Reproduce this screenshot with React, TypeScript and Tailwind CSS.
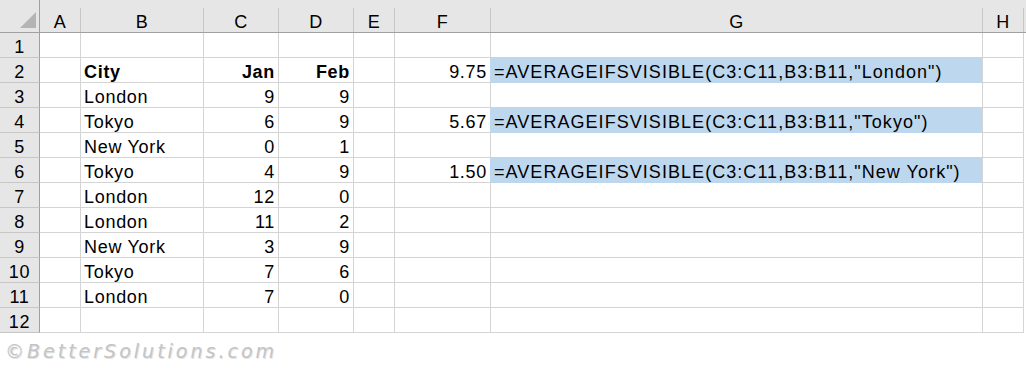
import React from "react";

const COLS = ["A", "B", "C", "D", "E", "F", "G", "H"];
const WIDTHS = ["w-[41px]", "w-[123px]", "w-[75px]", "w-[75px]", "w-[41px]", "w-[96px]", "w-[492px]", "w-[41px]"];

type Cell = { t: string; right?: boolean; bold?: boolean; hl?: boolean };

const data: Record<number, Record<string, Cell>> = {
  2: {
    B: { t: "City", bold: true },
    C: { t: "Jan", bold: true, right: true },
    D: { t: "Feb", bold: true, right: true },
    F: { t: "9.75", right: true },
    G: { t: '=AVERAGEIFSVISIBLE(C3:C11,B3:B11,"London")', hl: true },
  },
  3: { B: { t: "London" }, C: { t: "9", right: true }, D: { t: "9", right: true } },
  4: {
    B: { t: "Tokyo" },
    C: { t: "6", right: true },
    D: { t: "9", right: true },
    F: { t: "5.67", right: true },
    G: { t: '=AVERAGEIFSVISIBLE(C3:C11,B3:B11,"Tokyo")', hl: true },
  },
  5: { B: { t: "New York" }, C: { t: "0", right: true }, D: { t: "1", right: true } },
  6: {
    B: { t: "Tokyo" },
    C: { t: "4", right: true },
    D: { t: "9", right: true },
    F: { t: "1.50", right: true },
    G: { t: '=AVERAGEIFSVISIBLE(C3:C11,B3:B11,"New York")', hl: true },
  },
  7: { B: { t: "London" }, C: { t: "12", right: true }, D: { t: "0", right: true } },
  8: { B: { t: "London" }, C: { t: "11", right: true }, D: { t: "2", right: true } },
  9: { B: { t: "New York" }, C: { t: "3", right: true }, D: { t: "9", right: true } },
  10: { B: { t: "Tokyo" }, C: { t: "7", right: true }, D: { t: "6", right: true } },
  11: { B: { t: "London" }, C: { t: "7", right: true }, D: { t: "0", right: true } },
};

const HL_ROWS = [2, 4, 6];

export default function App() {
  const rows = Array.from({ length: 12 }, (_, i) => i + 1);
  return (
    <div
      className="w-[1026px] h-[368px] bg-white text-black overflow-hidden"
      style={{ fontFamily: '"Liberation Sans", Arial, sans-serif' }}
    >
      {/* column header */}
      <div className="flex h-[33px] bg-[#e6e6e6] border-b border-[#a0a0a0]">
        <div className="w-[40px] h-[32px] border-r border-[#a0a0a0] relative">
          <svg className="absolute left-[20px] top-[12px]" width="16" height="16" viewBox="0 0 16 16">
            <polygon points="16,0 16,16 0,16" fill="#b4b4b4" />
          </svg>
        </div>
        {COLS.map((c, i) => (
          <div key={c} className={`${WIDTHS[i]} pt-[8px]`}>
            <div className="h-[24px] border-r border-[#c6c6c6] flex items-end justify-center text-[18px] leading-[20px] tracking-[0.7px]">
              {c}
            </div>
          </div>
        ))}
      </div>
      {rows.map((r) => (
        <div key={r} className="flex h-[25px]">
          <div className="w-[40px] bg-[#e6e6e6] border-r border-[#a0a0a0] border-b border-b-[#c6c6c6] flex items-end justify-center text-[18px] leading-[20px] tracking-[0.7px]">
            {r}
          </div>
          {COLS.map((c, i) => {
            const cell = data[r]?.[c];
            const hl = cell?.hl;
            const nextHl = c === "G" && HL_ROWS.includes(r + 1);
            const leftOfHl = c === "F" && HL_ROWS.includes(r);
            const bb = hl || nextHl ? "border-b-[#bdd7ee]" : "border-b-[#d4d4d4]";
            const br = leftOfHl ? "border-r-[#bdd7ee]" : "border-r-[#d4d4d4]";
            return (
              <div
                key={c}
                className={`${WIDTHS[i]} h-[25px] border-r border-b ${bb} ${br} ${hl ? "bg-[#bdd7ee] tracking-[1.05px]" : "tracking-[0.7px]"} flex items-end px-[3px] text-[18px] leading-[20px] whitespace-nowrap ${
                  cell?.right ? "justify-end" : "justify-start"
                } ${cell?.bold ? "font-bold" : ""}`}
              >
                {cell?.t ?? ""}
              </div>
            );
          })}
        </div>
      ))}
      <div className="pl-[5px] pt-[8px]">
        <span
          className="italic text-[19px] leading-[20px] tracking-[3px] text-[#c4c4c4]"
          style={{ fontFamily: '"DejaVu Sans", sans-serif', textShadow: "1px 1px 0 #e4e4e4" }}
        >
          ©BetterSolutions.com
        </span>
      </div>
    </div>
  );
}
